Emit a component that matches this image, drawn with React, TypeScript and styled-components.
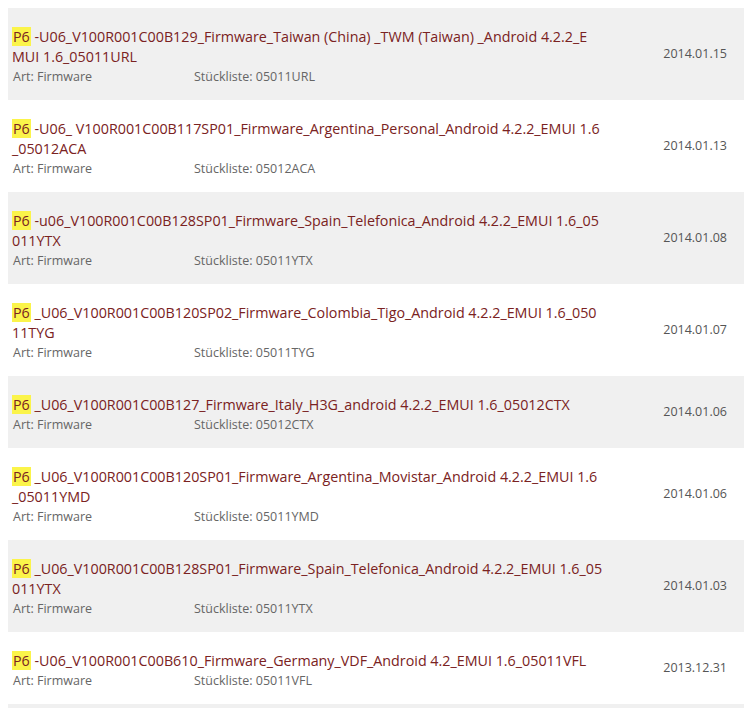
import React from "react";
import styled, { createGlobalStyle } from "styled-components";

type Item = {
  title: string;
  part: string;
  date: string;
};

// line breaks follow the fixed-width column of the original listing
const items: Item[] = [
  {
    title: "-U06_V100R001C00B129_Firmware_Taiwan (China) _TWM (Taiwan) _Android 4.2.2_E\nMUI 1.6_05011URL",
    part: "05011URL",
    date: "2014.01.15",
  },
  {
    title: "-U06_ V100R001C00B117SP01_Firmware_Argentina_Personal_Android 4.2.2_EMUI 1.6\n_05012ACA",
    part: "05012ACA",
    date: "2014.01.13",
  },
  {
    title: "-u06_V100R001C00B128SP01_Firmware_Spain_Telefonica_Android 4.2.2_EMUI 1.6_05\n011YTX",
    part: "05011YTX",
    date: "2014.01.08",
  },
  {
    title: "_U06_V100R001C00B120SP02_Firmware_Colombia_Tigo_Android 4.2.2_EMUI 1.6_050\n11TYG",
    part: "05011TYG",
    date: "2014.01.07",
  },
  {
    title: "_U06_V100R001C00B127_Firmware_Italy_H3G_android 4.2.2_EMUI 1.6_05012CTX",
    part: "05012CTX",
    date: "2014.01.06",
  },
  {
    title: "_U06_V100R001C00B120SP01_Firmware_Argentina_Movistar_Android 4.2.2_EMUI 1.6\n_05011YMD",
    part: "05011YMD",
    date: "2014.01.06",
  },
  {
    title: "_U06_V100R001C00B128SP01_Firmware_Spain_Telefonica_Android 4.2.2_EMUI 1.6_05\n011YTX",
    part: "05011YTX",
    date: "2014.01.03",
  },
  {
    title: "-U06_V100R001C00B610_Firmware_Germany_VDF_Android 4.2_EMUI 1.6_05011VFL",
    part: "05011VFL",
    date: "2013.12.31",
  },
  {
    title: "-U06_V100R001C00B609_Firmware_Germany_Android 4.2_EMUI 1.6_05011VFL",
    part: "05011VFL",
    date: "2013.12.27",
  },
];

const GlobalStyle = createGlobalStyle`
  html, body {
    margin: 0;
    padding: 0;
    background: #ffffff;
    overflow: hidden;
  }
  body {
    padding: 8px 0 0 8px;
    font-family: "Open Sans", "Liberation Sans", sans-serif;
  }
`;

const List = styled.ul`
  list-style: none;
  margin: 0;
  padding: 0;
`;

const Row = styled.li<{ $alt: boolean }>`
  display: flex;
  align-items: center;
  padding: 19px 17px 13px 4px;
  background: ${(p) => (p.$alt ? "#f0f0f0" : "#ffffff")};
`;

const Main = styled.div`
  width: 600px;
  flex: none;
`;

const Title = styled.a`
  display: block;
  font-size: 14.3px;
  line-height: 20px;
  color: #7a2222;
  text-decoration: none;
  white-space: pre-line;
`;

const Mark = styled.span`
  background: #fbf44a;
  color: #7a2222;
  padding: 0 1px;
`;

const Meta = styled.div`
  display: flex;
  font-size: 12.5px;
  line-height: 20px;
  color: #666666;
`;

const MetaCell = styled.span<{ $w?: number }>`
  width: ${(p) => (p.$w ? `${p.$w}px` : "auto")};
  flex: none;
  padding-left: 1px;
`;

const DateCell = styled.div`
  margin-left: auto;
  margin-top: -7px;
  font-size: 12.5px;
  color: #555555;
`;

export default function App() {
  return (
    <>
      <GlobalStyle />
      <List>
        {items.map((it, i) => (
          <Row key={i} $alt={i % 2 === 0}>
            <Main>
              <Title href="#">
                <Mark>P6</Mark> {it.title}
              </Title>
              <Meta>
                <MetaCell $w={180}>Art: Firmware</MetaCell>
                <MetaCell>Stückliste: {it.part}</MetaCell>
              </Meta>
            </Main>
            <DateCell>{it.date}</DateCell>
          </Row>
        ))}
      </List>
    </>
  );
}
